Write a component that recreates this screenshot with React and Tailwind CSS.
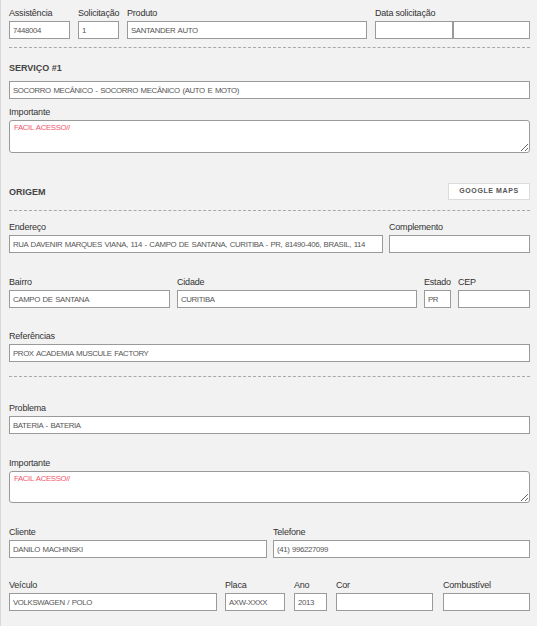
import React from "react";

const FONT = { fontFamily: '"Liberation Sans", Arial, sans-serif' };

function Label({ children }) {
  return (
    <div className="h-[12px] text-[9px] leading-[9px] tracking-[-0.2px] text-[#333] whitespace-nowrap">
      {children}
    </div>
  );
}

function Input({ value = "" }) {
  return (
    <input
      readOnly
      value={value}
      className="block w-full h-[18px] bg-white border border-[#9a9a9a] px-[3px] text-[7.8px] tracking-[-0.35px] [word-spacing:0.8px] text-[#555] outline-none"
      style={FONT}
    />
  );
}

function Field({ label, value, className = "" }) {
  return (
    <div className={className}>
      <Label>{label}</Label>
      <Input value={value} />
    </div>
  );
}

function Area({ value, h }) {
  return (
    <textarea
      readOnly
      value={value}
      className={`block w-full ${h} bg-white border border-[#9a9a9a] rounded-[3px] px-[4px] pt-[2px] text-[7.8px] tracking-[-0.35px] [word-spacing:0.8px] leading-[10px] text-[#f2566b] outline-none`}
      style={FONT}
    />
  );
}

function Dashed({ className = "" }) {
  return <div className={`border-t border-dashed border-[#a8a8a8] ${className}`} />;
}

function Heading({ children, className = "" }) {
  return (
    <div className={`h-[12px] text-[9px] leading-[12px] font-bold text-[#444] ${className}`}>
      {children}
    </div>
  );
}

export default function App() {
  return (
    <div
      className="w-[537px] h-[626px] bg-[#f2f2f2] border-l border-[#d8d8d8] pl-[8px] pr-[7px] pt-[9px] overflow-hidden"
      style={FONT}
    >
      {/* Row 1 */}
      <div className="flex gap-[8px]">
        <Field className="w-[61px]" label="Assistência" value="7448004" />
        <Field className="w-[41px]" label="Solicitação" value="1" />
        <Field className="w-[240px]" label="Produto" value="SANTANDER AUTO" />
        <div className="flex-1">
          <Label>Data solicitação</Label>
          <div className="flex">
            <div className="w-1/2"><Input /></div>
            <div className="w-1/2"><Input /></div>
          </div>
        </div>
      </div>

      <Dashed className="mt-[8px]" />

      <Heading className="mt-[14px] mb-[7px]">SERVIÇO #1</Heading>
      <Input value="SOCORRO MECÂNICO - SOCORRO MECÂNICO (AUTO E MOTO)" />

      <div className="mt-[9px]">
        <Label>Importante</Label>
        <Area value="FACIL ACESSO//" h="h-[33px]" />
      </div>

      <div className="mt-[30px] flex items-center justify-between h-[17px]">
        <Heading>ORIGEM</Heading>
        <div className="h-[17px] w-[82px] bg-white border border-[#dcdcdc] flex items-center justify-center text-[7px] font-bold tracking-[0.6px] text-[#555]">
          GOOGLE MAPS
        </div>
      </div>

      <Dashed className="mt-[10px]" />

      <div className="mt-[12px] flex gap-[6px]">
        <Field
          className="w-[374px]"
          label="Endereço"
          value="RUA DAVENIR MARQUES VIANA, 114 - CAMPO DE SANTANA, CURITIBA - PR, 81490-406, BRASIL, 114"
        />
        <Field className="flex-1" label="Complemento" value="" />
      </div>

      <div className="mt-[25px] flex gap-[7px]">
        <Field className="w-[161px]" label="Bairro" value="CAMPO DE SANTANA" />
        <Field className="w-[240px]" label="Cidade" value="CURITIBA" />
        <Field className="w-[27px]" label="Estado" value="PR" />
        <Field className="flex-1" label="CEP" value="" />
      </div>

      <div className="mt-[24px]">
        <Field label="Referências" value="PROX ACADEMIA MUSCULE FACTORY" />
      </div>

      <Dashed className="mt-[14px]" />

      <div className="mt-[27px]">
        <Field label="Problema" value="BATERIA - BATERIA" />
      </div>

      <div className="mt-[25px]">
        <Label>Importante</Label>
        <Area value="FACIL ACESSO//" h="h-[32px]" />
      </div>

      <div className="mt-[25px] flex gap-[6px]">
        <Field className="w-[258px]" label="Cliente" value="DANILO MACHINSKI" />
        <Field className="flex-1" label="Telefone" value="(41) 996227099" />
      </div>

      <div className="mt-[23px] flex">
        <Field className="w-[208px]" label="Veículo" value="VOLKSWAGEN / POLO" />
        <Field className="w-[60px] ml-[8px]" label="Placa" value="AXW-XXXX" />
        <Field className="w-[33px] ml-[9px]" label="Ano" value="2013" />
        <Field className="w-[97px] ml-[9px]" label="Cor" value="" />
        <Field className="flex-1 ml-[10px]" label="Combustível" value="" />
      </div>
    </div>
  );
}
